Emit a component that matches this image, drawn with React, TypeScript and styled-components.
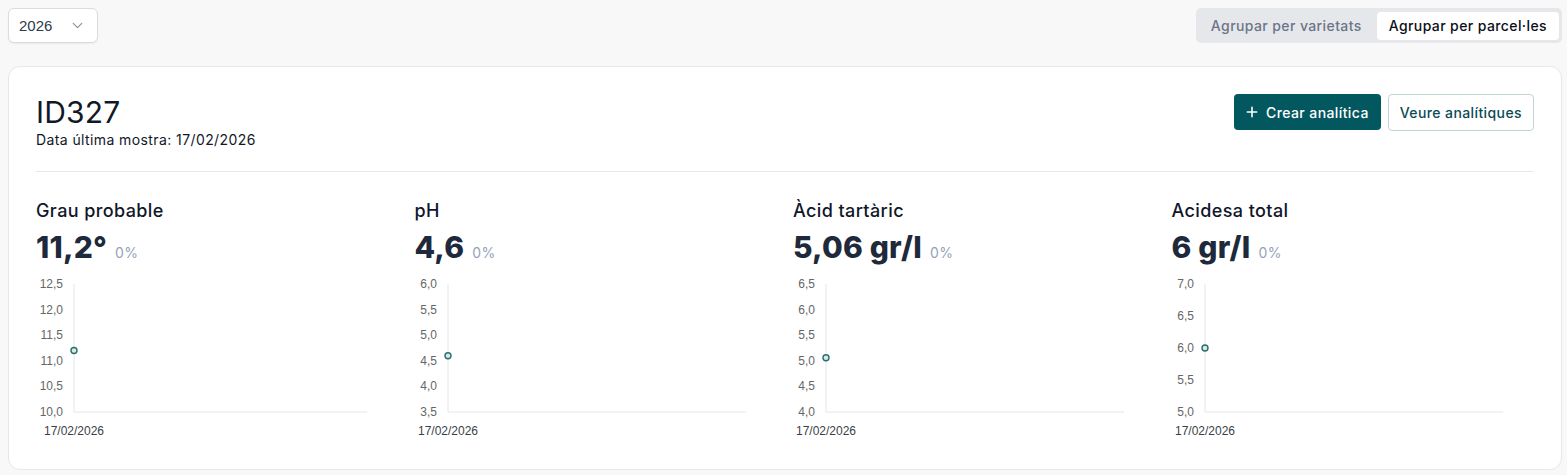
import styled, {createGlobalStyle} from "styled-components";

const GlobalStyle = createGlobalStyle`
    * {
        box-sizing: border-box;
    }

    body {
        margin: 0;
        background: #f8f8f8;
        font-family: "Inter", "Noto Sans", sans-serif;
        letter-spacing: 0.4px;
        color: #1e293b;
    }
`

type MetricType = {
    title: string,
    value: string,
    ticks: string[],
    min: number,
    max: number,
    point: number,
    axisX: number,
}

const metrics: MetricType[] = [
    {title: "Grau probable", value: "11,2°", ticks: ["12,5", "12,0", "11,5", "11,0", "10,5", "10,0"], min: 10, max: 12.5, point: 11.2, axisX: 38},
    {title: "pH", value: "4,6", ticks: ["6,0", "5,5", "5,0", "4,5", "4,0", "3,5"], min: 3.5, max: 6, point: 4.6, axisX: 33},
    {title: "Àcid tartàric", value: "5,06 gr/l", ticks: ["6,5", "6,0", "5,5", "5,0", "4,5", "4,0"], min: 4, max: 6.5, point: 5.06, axisX: 33},
    {title: "Acidesa total", value: "6 gr/l", ticks: ["7,0", "6,5", "6,0", "5,5", "5,0"], min: 5, max: 7, point: 6, axisX: 33},
]

const CHART_TOP = 8
const CHART_BOTTOM = 136
const CHART_END = 331

const Chart = (props: { metric: MetricType }) => {
    const {ticks, min, max, point, axisX} = props.metric
    const h = CHART_BOTTOM - CHART_TOP
    const py = CHART_TOP + (max - point) / (max - min) * h
    return (
        <ChartSvg width="340" height="165" viewBox="0 0 340 165">
            <line x1={axisX} y1={CHART_TOP} x2={axisX} y2={CHART_BOTTOM} stroke="#e3e6ea" strokeWidth="1"/>
            <line x1={axisX} y1={CHART_BOTTOM} x2={CHART_END} y2={CHART_BOTTOM} stroke="#e3e6ea" strokeWidth="1"/>
            {ticks.map((t, i) => {
                const y = CHART_TOP + i * h / (ticks.length - 1)
                return <text key={t} x={axisX - 11} y={y + 4} textAnchor="end" fontSize="12" fill="#666"
                             fontFamily="Liberation Sans, Arial, sans-serif">{t}</text>
            })}
            <text x={axisX} y={159} textAnchor="middle" fontSize="12" fill="#3a3f47"
                  fontFamily="Liberation Sans, Arial, sans-serif">17/02/2026</text>
            <circle cx={axisX} cy={py} r="3" fill="#d6e9e7" stroke="#2a6e6c" strokeWidth="1.4"/>
        </ChartSvg>
    )
}

export default function App() {
    return (
        <Page>
            <GlobalStyle/>
            <TopBar>
                <YearSelect>
                    <span>2026</span>
                    <svg width="17" height="17" viewBox="0 0 24 24" fill="none" stroke="#8b94a3" strokeWidth="1.8"
                         strokeLinecap="round" strokeLinejoin="round">
                        <path d="m6 9 6 6 6-6"/>
                    </svg>
                </YearSelect>
                <Segmented>
                    <SegmentButton>Agrupar per varietats</SegmentButton>
                    <SegmentButton $active>Agrupar per parcel·les</SegmentButton>
                </Segmented>
            </TopBar>
            <Card>
                <CardHeader>
                    <div>
                        <Title>ID327</Title>
                        <Subtitle>Data última mostra: 17/02/2026</Subtitle>
                    </div>
                    <Actions>
                        <PrimaryButton>
                            <svg width="16" height="16" viewBox="0 0 24 24" fill="none" stroke="#fff" strokeWidth="2.4"
                                 strokeLinecap="round">
                                <path d="M5 12h14M12 5v14"/>
                            </svg>
                            Crear analítica
                        </PrimaryButton>
                        <OutlineButton>Veure analítiques</OutlineButton>
                    </Actions>
                </CardHeader>
                <MetricsGrid>
                    {metrics.map((m) => (
                        <Metric key={m.title}>
                            <MetricTitle>{m.title}</MetricTitle>
                            <MetricValueRow>
                                <MetricValue>{m.value}</MetricValue>
                                <MetricDelta>0%</MetricDelta>
                            </MetricValueRow>
                            <Chart metric={m}/>
                        </Metric>
                    ))}
                </MetricsGrid>
            </Card>
        </Page>
    )
}

const Page = styled.div`
    padding: 8px 5px 7px 8px;
    display: flex;
    flex-direction: column;
    gap: 23px;
`

const TopBar = styled.div`
    display: flex;
    justify-content: space-between;
    align-items: center;
`

const YearSelect = styled.div`
    width: 90px;
    height: 35px;
    display: flex;
    align-items: center;
    justify-content: space-between;
    padding: 0 11px 0 10px;
    background: #fff;
    border: 1px solid #d8dde4;
    border-radius: 6px;
    box-shadow: 0 1px 2px rgba(0, 0, 0, 0.06);
    font-family: "Liberation Sans", Arial, sans-serif;
    letter-spacing: 0;
    font-size: 15px;
    color: #2f3a4c;
`

const Segmented = styled.div`
    display: flex;
    height: 35px;
    align-items: center;
    padding: 3px;
    background: #e6e7ea;
    border-radius: 5px;
    gap: 3px;
`

const SegmentButton = styled.div<{ $active?: boolean }>`
    height: 28px;
    display: flex;
    align-items: center;
    padding: 0 12px;
    border-radius: 4px;
    font-size: 14px;
    font-weight: 500;
    color: ${props => props.$active ? "#0b0f1a" : "#6b7588"};
    background: ${props => props.$active ? "#fff" : "transparent"};
`

const Card = styled.div`
    background: #fff;
    border: 1px solid #e3e7ee;
    border-radius: 12px;
    padding: 27px 27px 28px 27px;
`

const CardHeader = styled.div`
    display: flex;
    justify-content: space-between;
    align-items: flex-start;
    padding-bottom: 21px;
    border-bottom: 1px solid #e5e8ee;
`

const Title = styled.h1`
    margin: 0;
    font-size: 30px;
    line-height: 36px;
    font-weight: 400;
    letter-spacing: 0.2px;
    color: #111827;
`

const Subtitle = styled.div`
    font-size: 14px;
    line-height: 20px;
    color: #111827;
`

const Actions = styled.div`
    display: flex;
    gap: 7px;
`

const PrimaryButton = styled.button`
    height: 36px;
    display: flex;
    align-items: center;
    gap: 6px;
    padding: 0 12px 0 10px;
    border: none;
    border-radius: 4px;
    background: #03585f;
    color: #fff;
    font-family: inherit;
    letter-spacing: inherit;
    font-size: 14px;
    font-weight: 500;
`

const OutlineButton = styled.button`
    height: 37px;
    padding: 0 11px;
    border: 1px solid #c3d3d6;
    border-radius: 4px;
    background: #fff;
    color: #0b4b55;
    font-family: inherit;
    letter-spacing: inherit;
    font-size: 14px;
    font-weight: 500;
`

const MetricsGrid = styled.div`
    display: grid;
    grid-template-columns: repeat(4, 1fr);
    gap: 16px;
    padding-top: 25px;
`

const Metric = styled.div`
    display: flex;
    flex-direction: column;
`

const MetricTitle = styled.div`
    font-size: 18px;
    line-height: 28px;
    font-weight: 500;
    color: #0f172a;
`

const MetricValueRow = styled.div`
    display: flex;
    align-items: baseline;
    gap: 8px;
    margin-top: 3px;
`

const MetricValue = styled.div`
    font-size: 30px;
    line-height: 38px;
    font-weight: 800;
    letter-spacing: 0.2px;
    color: #1e293b;
`

const MetricDelta = styled.span`
    font-size: 14px;
    color: #94a3b8;
`

const ChartSvg = styled.svg`
    display: block;
    margin-top: 10px;
    letter-spacing: 0;
`
